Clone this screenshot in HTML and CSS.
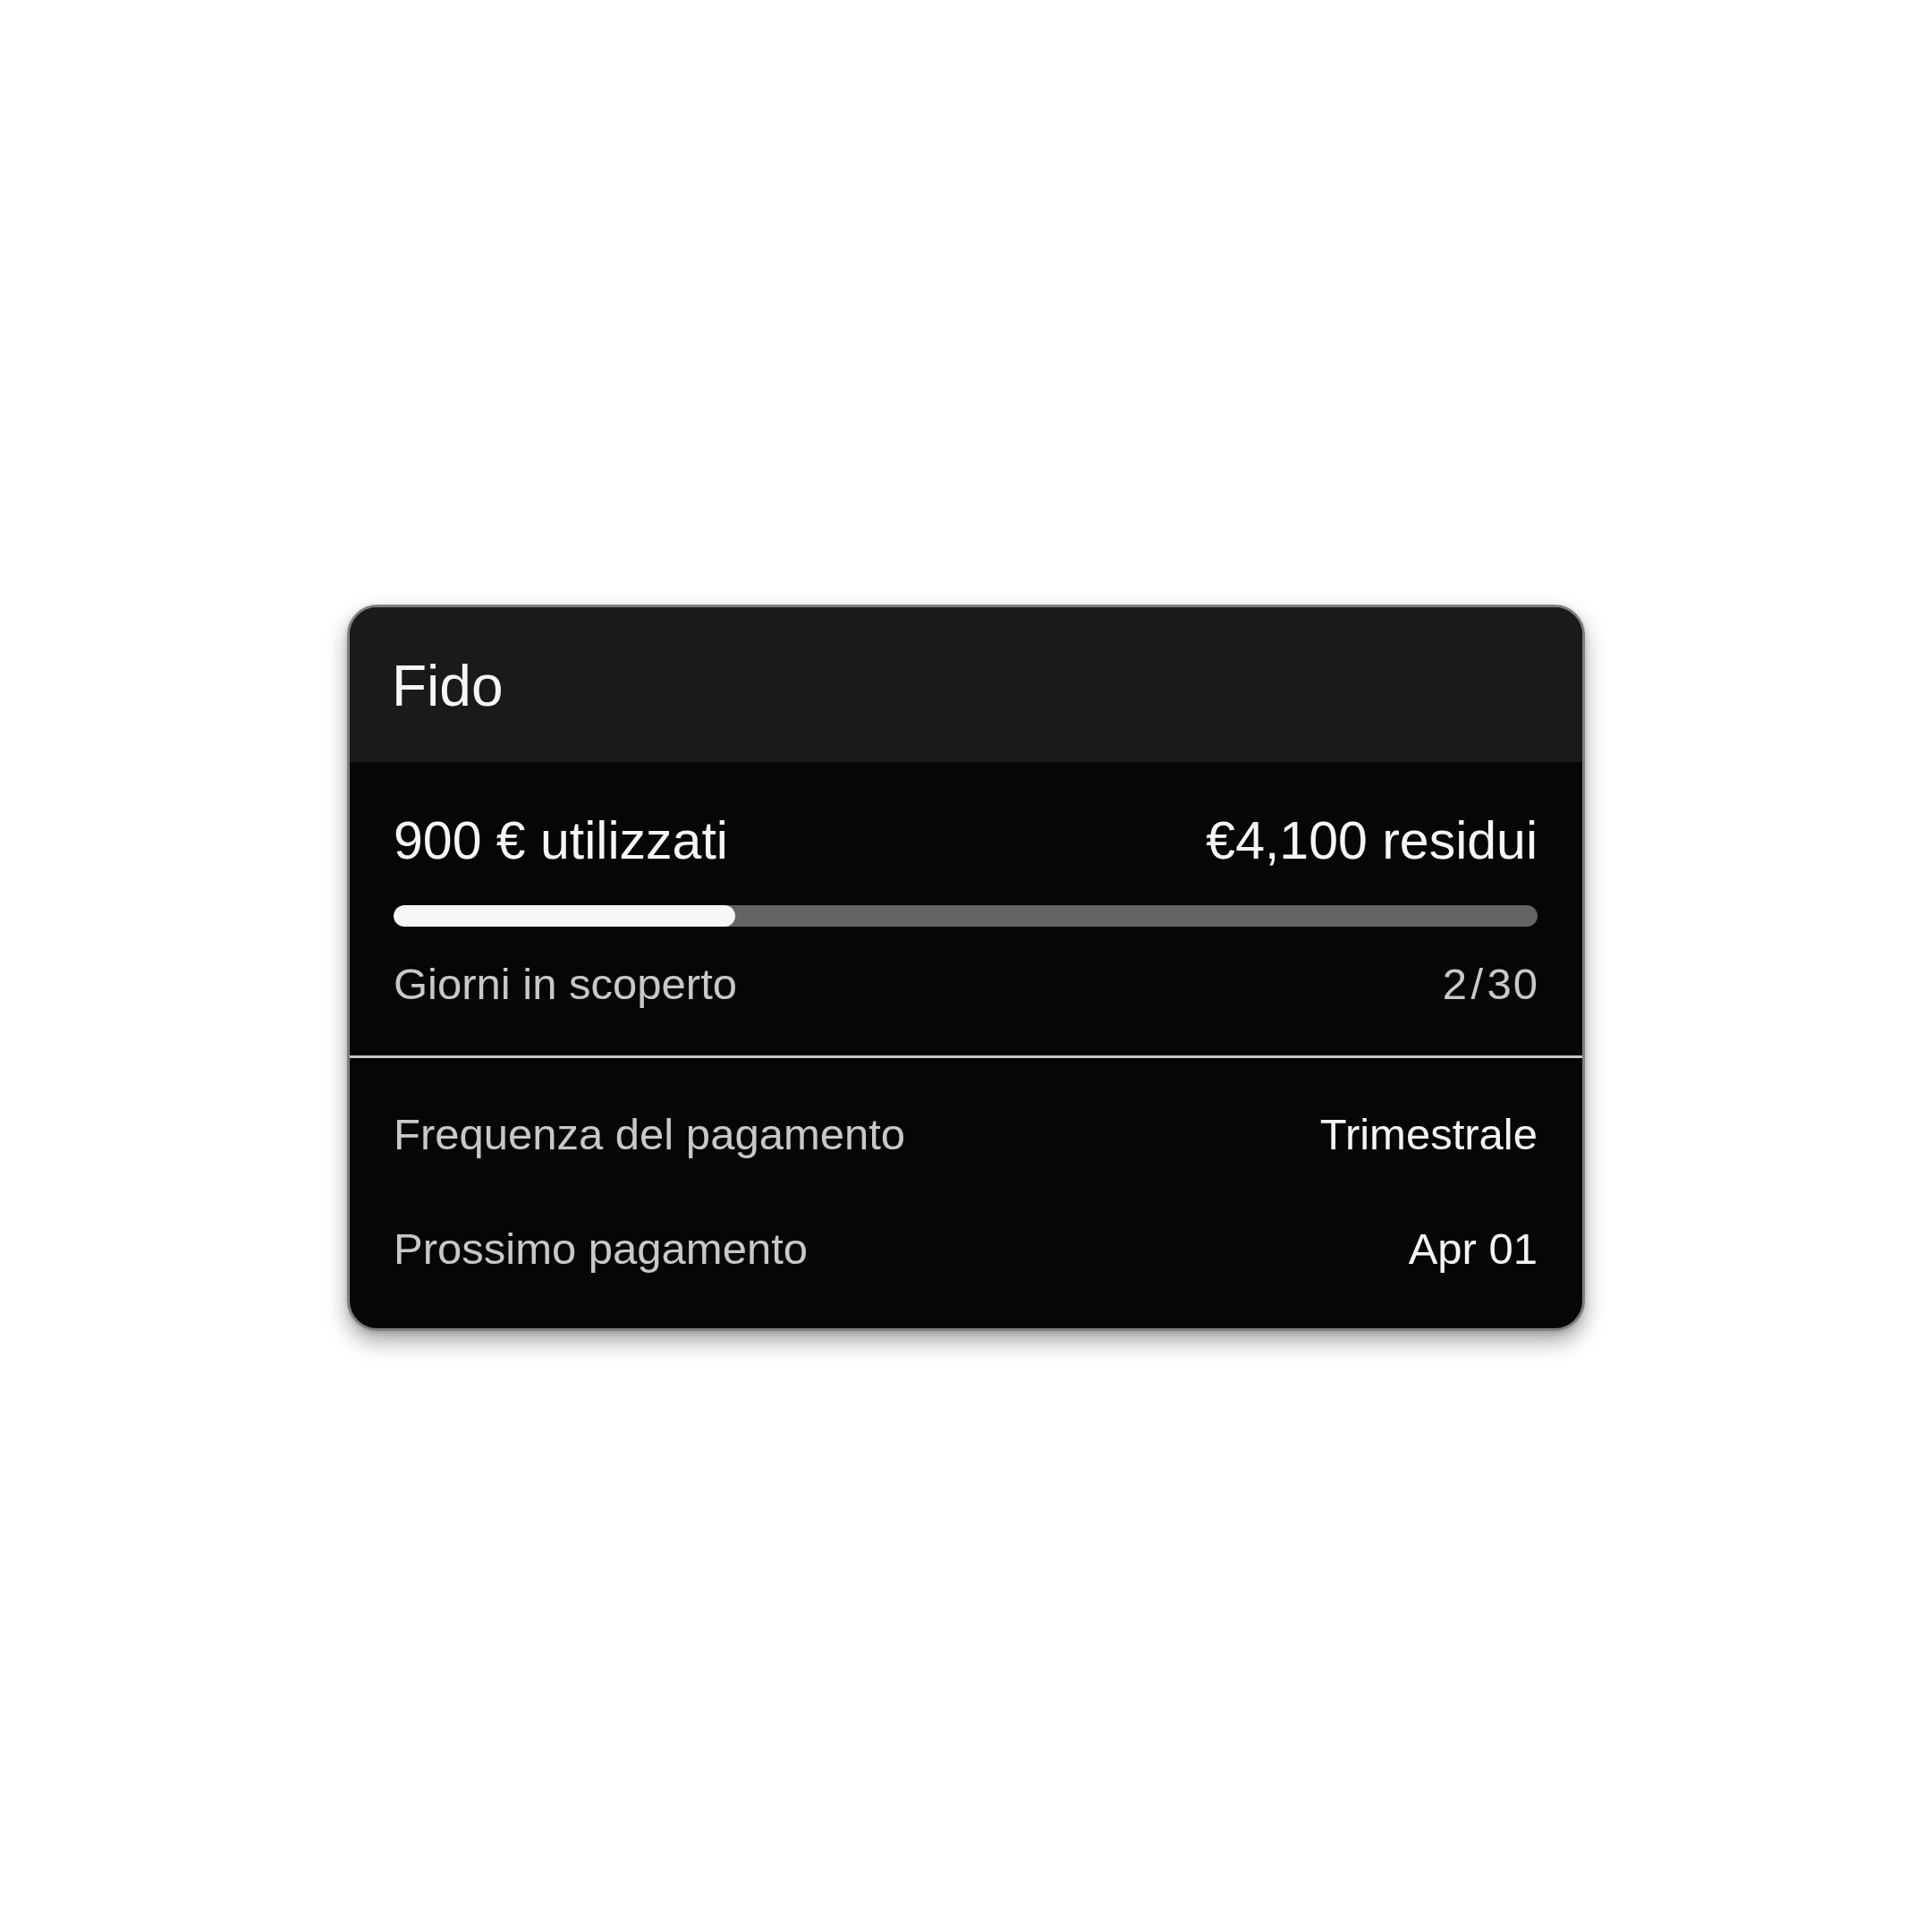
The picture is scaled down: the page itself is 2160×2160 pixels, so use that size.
FILE: index.html
```html
<!DOCTYPE html>
<html lang="it">
<head>
<meta charset="utf-8">
<title>Fido</title>
<link rel="stylesheet" href="styles.css">
</head>
<body>
  <main class="stage">
    <section class="credit-card">
      <header class="credit-head">
        <h1 class="credit-title">Fido</h1>
      </header>
      <div class="usage">
        <div class="usage-amounts">
          <span class="amount">900 € utilizzati</span>
          <span class="amount">€4,100 residui</span>
        </div>
        <div class="meter">
          <div class="meter-fill" style="width: 29.9%"></div>
        </div>
        <div class="row muted">
          <span>Giorni in scoperto</span>
          <span class="ratio">2<span class="slash">/</span>30</span>
        </div>
      </div>
      <div class="details">
        <div class="row detail-row">
          <span class="label">Frequenza del pagamento</span>
          <span class="value">Trimestrale</span>
        </div>
        <div class="row detail-row">
          <span class="label">Prossimo pagamento</span>
          <span class="value">Apr 01</span>
        </div>
      </div>
    </section>
  </main>
</body>
</html>
```
FILE: styles.css
```css
* {
  box-sizing: border-box;
}

html, body {
  margin: 0;
  padding: 0;
  background: #ffffff;
}

body {
  font-family: "Liberation Sans", Arial, sans-serif;
}

.stage {
  min-height: 2160px;
  padding-top: 4px;
  display: flex;
  align-items: center;
  justify-content: center;
}

.credit-card {
  width: 1384px;
  border: 3px solid #7e7e7e;
  border-radius: 34px;
  background: #060606;
  overflow: hidden;
  box-shadow: 0 12px 24px rgba(0, 0, 0, 0.34), 0 2px 6px rgba(0, 0, 0, 0.15);
}

.credit-head {
  background: #1a1a1a;
  padding: 52px 50px 49px 47px;
}

.credit-title {
  margin: 0;
  font-size: 64px;
  line-height: 72px;
  font-weight: 400;
  color: #f6f6f6;
}

.usage {
  padding: 54px 50px 51px 49px;
  border-bottom: 3px solid #c6c6c6;
}

.usage-amounts {
  display: flex;
  justify-content: space-between;
  align-items: baseline;
}

.amount {
  font-size: 59px;
  line-height: 68px;
  color: #f6f6f6;
}

.meter {
  margin-top: 38px;
  height: 24px;
  border-radius: 12px;
  background: #646464;
  overflow: hidden;
}

.meter-fill {
  height: 100%;
  border-radius: 12px;
  background: #f7f7f7;
}

.row {
  display: flex;
  justify-content: space-between;
  align-items: baseline;
  font-size: 49px;
  line-height: 58px;
}

.muted {
  margin-top: 35px;
  color: #c8c8c8;
}

.ratio {
  letter-spacing: 0.04em;
  margin-right: -0.04em;
}

.slash {
  padding: 0 0.05em;
}

.details {
  padding: 21px 50px 25px 49px;
}

.detail-row {
  padding: 35px 0;
}

.label {
  color: #c8c8c8;
}

.value {
  color: #f4f4f4;
}
```
